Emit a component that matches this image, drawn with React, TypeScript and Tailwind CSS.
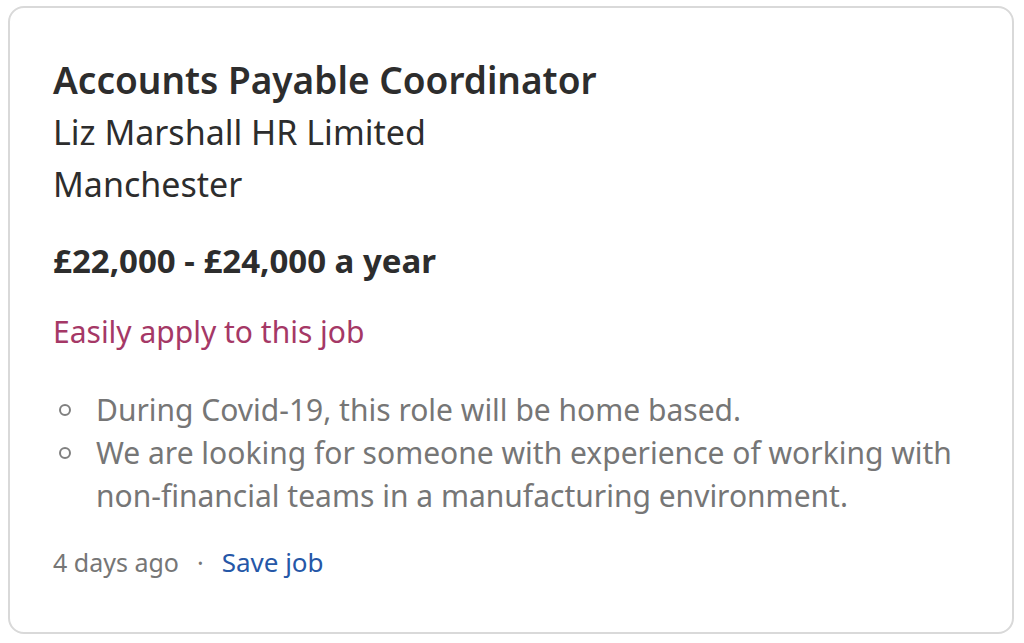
const bullets = [
  "During Covid-19, this role will be home based.",
  "We are looking for someone with experience of working with non-financial teams in a manufacturing environment.",
];

export default function App() {
  return (
    <div className="w-[1024px] h-[643px] bg-white pt-[6px] pl-[8px] pr-[10px]" style={{ fontFamily: '"Noto Sans", "Open Sans", sans-serif' }}>
      <div className="h-[628px] border-2 border-[#d9d9d9] rounded-[16px] pl-[43px] pr-[43px] pt-[46px]">
        <h2 className="text-[37px] leading-[52px] font-semibold text-[#2d2d2d]">Accounts Payable Coordinator</h2>
        <div className="text-[34px] leading-[52px] text-[#2d2d2d]">Liz Marshall HR Limited</div>
        <div className="text-[34px] leading-[52px] text-[#2d2d2d]">Manchester</div>
        <div className="mt-[25px] text-[33px] leading-[52px] font-bold text-[#2d2d2d]">£22,000 - £24,000 a year</div>
        <div className="mt-[23px] text-[30px] leading-[44px] text-[#a53866]">Easily apply to this job</div>
        <ul className="mt-[34px] text-[30px] leading-[43px] text-[#767676]">
          {bullets.map((b) => (
            <li key={b} className="flex">
              <span className="w-[43px] shrink-0 h-[43px] flex items-center pl-[6px]">
                <span className="w-[12px] h-[12px] rounded-full border-2 border-[#808080]" />
              </span>
              <span>{b}</span>
            </li>
          ))}
        </ul>
        <div className="mt-[27px] flex items-center text-[25px] leading-[36px]">
          <span className="text-[#767676]">4 days ago</span>
          <span className="text-[#767676] ml-[18px] mr-[18px]">·</span>
          <span className="text-[#2557a7] text-[26px]">Save job</span>
        </div>
      </div>
    </div>
  );
}
